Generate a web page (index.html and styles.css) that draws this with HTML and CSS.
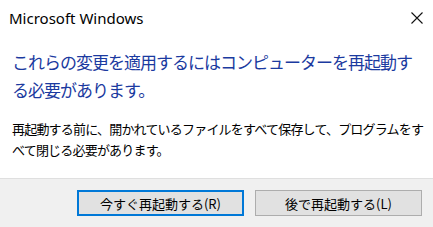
FILE: index.html
```html
<!DOCTYPE html>
<html lang="ja">
<head>
  <meta charset="UTF-8">
  <title>Microsoft Windows</title>
  <link rel="stylesheet" href="styles.css">
</head>
<body>

  <div class="dialog">
    <div class="titlebar">
      <span class="title">Microsoft Windows</span>
      <svg class="close" width="12" height="12" viewBox="0 0 12 12">
        <path d="M0.5 0.5 L11.5 11.5 M11.5 0.5 L0.5 11.5" stroke="#111" stroke-width="1.1" fill="none"/>
      </svg>
    </div>

    <div class="content">
      <p class="instruction">これらの変更を適用するにはコンピューターを再起動する必要があります。</p>
      <p class="message">再起動する前に、開かれているファイルをすべて保存して、プログラムをすべて閉じる必要があります。</p>
    </div>

    <div class="footer">
      <button class="btn default">今すぐ再起動する(R)</button>
      <button class="btn">後で再起動する(L)</button>
    </div>
  </div>

</body>
</html>
```

FILE: styles.css
```css
body {
  margin: 0;
  padding: 0;
  background-color: #fff;
  font-family: "Noto Sans", "Noto Sans CJK JP", sans-serif;
}

.dialog {
  width: 433px;
  height: 227px;
  display: flex;
  flex-direction: column;
}

.titlebar {
  height: 36px;
  display: flex;
  align-items: center;
  padding-left: 9px;
  padding-right: 10px;
}

.title {
  font-size: 15px;
  color: #000;
}

.close {
  margin-left: auto;
}

.content {
  padding: 0 10px 0 12px;
  flex: 1;
}

.instruction {
  margin: 12px 0 0;
  padding-right: 2px;
  font-family: "Noto Sans CJK JP", sans-serif;
  font-size: 17px;
  letter-spacing: -1px;
  line-height: 28px;
  color: #1b3aa0;
}

.message {
  margin: 14px -5px 0 0;
  font-family: "Noto Sans CJK JP", sans-serif;
  font-size: 13px;
  letter-spacing: -0.8px;
  line-height: 21px;
  color: #000;
}

/* Button strip at the bottom */
.footer {
  height: 49px;
  background-color: #f0f0f0;
  border-top: 1px solid #dfdfdf;
  display: flex;
  justify-content: flex-end;
  align-items: flex-start;
  gap: 11px;
  padding: 11px 11px 0 0;
  box-sizing: border-box;
}

.btn {
  width: 167px;
  height: 26px;
  margin: 0;
  padding: 0;
  background-color: #e1e1e1;
  border: 1px solid #adadad;
  font-family: "Noto Sans CJK JP", sans-serif;
  font-size: 13px;
  color: #000;
}

.btn.default {
  border: 2px solid #0078d7;
}
```
